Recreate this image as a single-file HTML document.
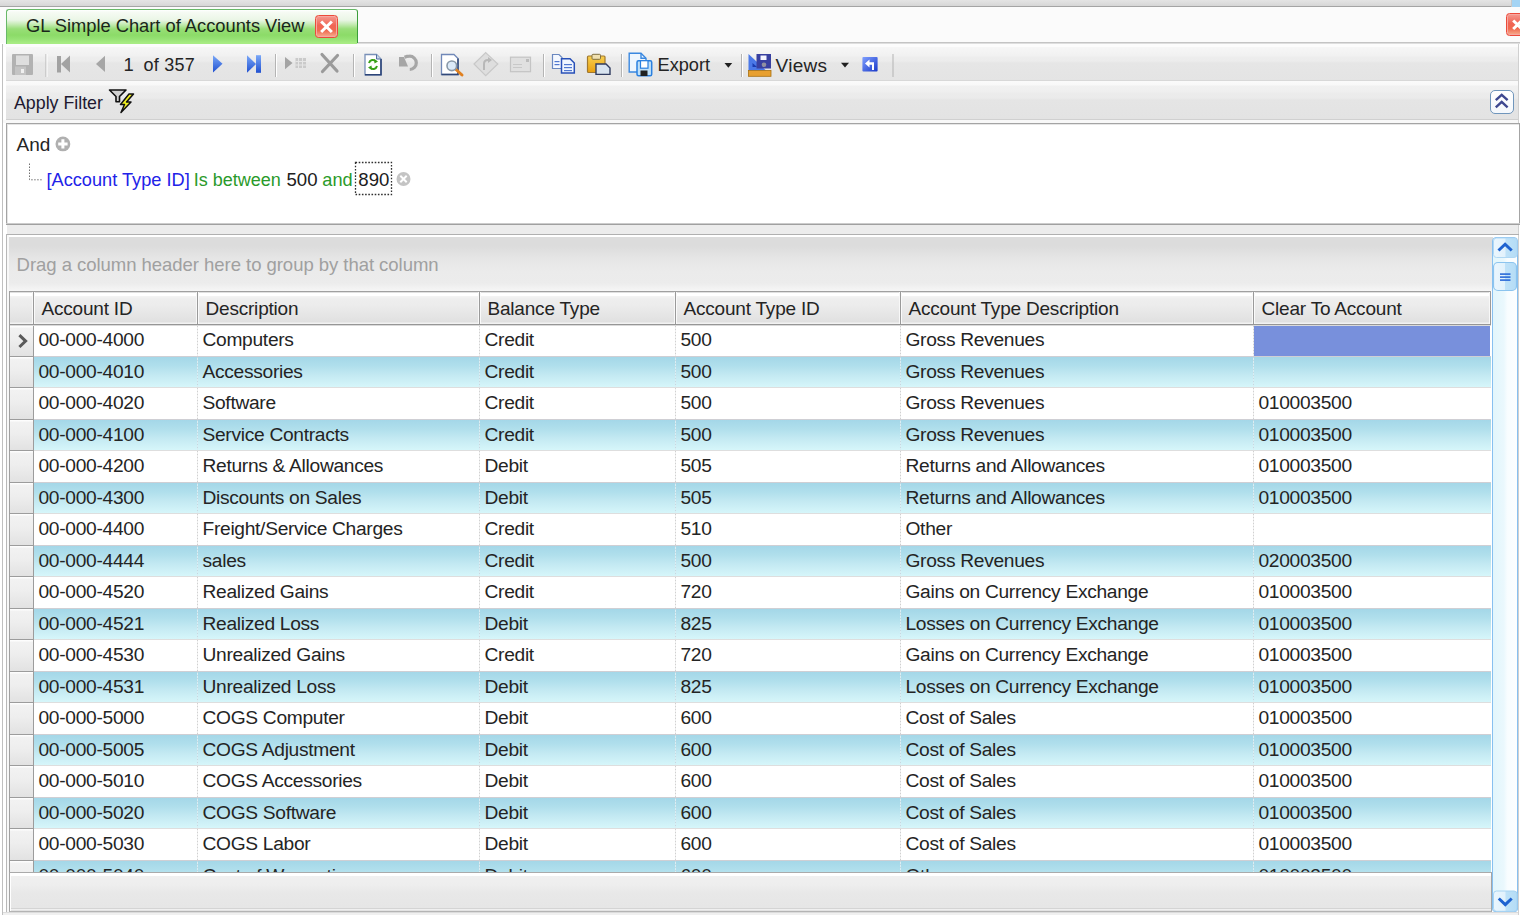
<!DOCTYPE html>
<html><head><meta charset="utf-8">
<style>
*{box-sizing:border-box;margin:0;padding:0}
html,body{width:1520px;height:915px;overflow:hidden;background:#fff;font-family:"Liberation Sans",sans-serif;color:#1a1a1a}
.a{position:absolute}
.t{position:absolute;white-space:nowrap;line-height:1;font-size:19px;color:#242424}
</style></head><body>
<!-- top strip -->
<div class="a" style="left:0;top:0;width:1511px;height:6px;background:linear-gradient(#e4e4e4,#d6d6d6)"></div>
<div class="a" style="left:0;top:6px;width:1511px;height:1px;background:#a4a4a4"></div>
<div class="a" style="left:1511px;top:0;width:1px;height:7px;background:#c8c8c8"></div>
<div class="a" style="left:1512px;top:0;width:8px;height:7px;background:#a4d4f4"></div>
<!-- tab strip bg -->
<div class="a" style="left:0;top:7px;width:1520px;height:36px;background:#fbfbfb"></div>
<div class="a" style="left:357px;top:42px;width:1163px;height:1px;background:#c4c4c4"></div>
<!-- tab -->
<div class="a" style="left:6px;top:9px;width:352px;height:35px;border:1px solid #68b868;border-left-width:1.5px;border-right:1px solid #3a9e3a;border-bottom:none;border-radius:3px 3px 0 0;background:linear-gradient(#ffffff 0px,#f6fbf4 2px,#eaf6e6 10px,#c8ecb8 14px,#98de78 19px,#8cdb68 25px,#96e274 29px,#a8ec84 33px)"></div>
<div class="t" id="tabt" style="left:26px;top:17px;font-size:18.3px;color:#1a261a">GL Simple Chart of Accounts View</div>
<!-- tab close -->
<div class="a" style="left:315px;top:15px;width:23px;height:22.5px;border-radius:3.5px;border:1px solid #ec4a3a;box-shadow:inset 0 0 0 1px #f6a8a0;background:linear-gradient(#f59a90,#f06454 45%,#f06a50 70%,#f6b090)"></div>
<svg class="a" style="left:315px;top:15px" width="23" height="23"><path d="M7.2 7.5 L15.8 16 M15.8 7.5 L7.2 16" stroke="#fff" stroke-width="3" stroke-linecap="square"/></svg>
<!-- right close -->
<div class="a" style="left:1506px;top:13px;width:23px;height:23px;border-radius:3.5px;border:1px solid #ec4a3a;box-shadow:inset 0 0 0 1px #f6a8a0;background:linear-gradient(#f59a90,#f06454 45%,#f06a50 70%,#f6b090)"></div>
<svg class="a" style="left:1506px;top:13px" width="14" height="23"><path d="M7.2 7.5 L15.8 16 M15.8 7.5 L7.2 16" stroke="#fff" stroke-width="3"/></svg>

<!-- panel borders -->
<div class="a" style="left:2px;top:44px;width:1px;height:871px;background:#c0c0c0"></div>
<div class="a" style="left:1518px;top:43px;width:1px;height:872px;background:#d0d0d0"></div>

<!-- toolbar -->
<div class="a" style="left:3px;top:44px;width:1515px;height:3px;background:#fcfcfc"></div>
<div class="a" style="left:357px;top:43px;width:1163px;height:1px;background:#dedede"></div>
<div class="a" style="left:6px;top:47px;width:1512px;height:34px;background:linear-gradient(#f6f6f6 0,#f1f1f1 9px,#ededed 10px,#ececec 14px,#e6e6e6 16px,#e4e4e4 33px,#d8d8d8 33px)"></div>
<!-- apply filter bar -->
<div class="a" style="left:6px;top:81px;width:1512px;height:38px;background:linear-gradient(#fafafa 0,#f8f8f8 4px,#f1f1f1 5px,#efefef 11px,#ececec 12px,#ebebeb 17px,#e5e5e5 19px,#e3e3e3 38px)"></div>
<div class="a" style="left:6px;top:119px;width:1512px;height:1px;background:#d0d0d0"></div>
<div class="a" style="left:3px;top:120px;width:1515px;height:3px;background:#f8f8f8"></div>
<div class="t" style="left:14px;top:95px;font-size:17.8px;color:#201830">Apply Filter</div>

<!--toolbar-->
<svg class="a" style="left:0;top:0" width="900" height="125" viewBox="0 0 900 125">
<defs>
<linearGradient id="gblue" x1="0" y1="0" x2="0" y2="1"><stop offset="0" stop-color="#7aa8f8"/><stop offset="1" stop-color="#2050d0"/></linearGradient>
<linearGradient id="gblue2" x1="0" y1="0" x2="1" y2="1"><stop offset="0" stop-color="#80a0ff"/><stop offset="1" stop-color="#1838c8"/></linearGradient>
<linearGradient id="gyel" x1="0" y1="0" x2="0" y2="1"><stop offset="0" stop-color="#f8d050"/><stop offset="1" stop-color="#e8a010"/></linearGradient>
</defs>
<!-- separators -->
<g fill="#b4b4b4">
<rect x="45.5" y="54" width="1" height="23"/><rect x="275" y="54" width="1" height="23"/><rect x="353" y="54" width="1" height="23"/>
<rect x="431" y="54" width="1" height="23"/><rect x="543" y="54" width="1" height="23"/><rect x="621" y="54" width="1" height="23"/>
<rect x="741" y="54" width="1" height="23"/><rect x="892.5" y="54" width="1" height="23"/>
</g>
<g fill="#ffffff">
<rect x="46.5" y="54" width="1" height="23"/><rect x="276" y="54" width="1" height="23"/><rect x="354" y="54" width="1" height="23"/>
<rect x="432" y="54" width="1" height="23"/><rect x="544" y="54" width="1" height="23"/><rect x="622" y="54" width="1" height="23"/>
<rect x="742" y="54" width="1" height="23"/>
</g>
<!-- save floppy -->
<rect x="12" y="54" width="21" height="21" rx="1" fill="#b2b2b2"/>
<rect x="16" y="55.5" width="13" height="9.5" fill="#dedede"/>
<rect x="15" y="66.5" width="11" height="8.5" fill="#c4c4c4"/>
<rect x="21" y="69" width="3" height="4" fill="#f0f0f0"/>
<!-- first -->
<g fill="#a2a2a2"><rect x="57" y="56" width="4" height="16.5"/><path d="M61 64 L70 55.5 L70 72.5 Z"/></g>
<!-- prev -->
<path d="M96 64 L105 55.8 L105 72 Z" fill="#a6a6a6"/>
<!-- next -->
<path d="M213 55.2 L222.5 63.8 L213 72.4 Z" fill="url(#gblue)"/>
<!-- last -->
<path d="M247 55.2 L256 64 L247 72.8 Z" fill="url(#gblue)"/><rect x="256" y="55.2" width="5" height="17.6" fill="url(#gblue)"/>
<!-- append -->
<path d="M285 57 L292.5 63 L285 69.2 Z" fill="#a4a4a4"/>
<g fill="#cacaca"><rect x="295.5" y="58" width="10.5" height="10"/></g>
<g fill="#e6e6e6"><rect x="298" y="58" width="1" height="10"/><rect x="302" y="58" width="1" height="10"/><rect x="295.5" y="61" width="10.5" height="1"/><rect x="295.5" y="64.5" width="10.5" height="1"/></g>
<!-- delete X -->
<path d="M322 54.5 L337 71 M337.5 55.5 L322.5 71.5" stroke="#9a9a9a" stroke-width="3.2" stroke-linecap="round"/>
<!-- refresh doc -->
<path d="M365 54.5 L376.5 54.5 L381 59 L381 74.8 L365 74.8 Z" fill="#fff" stroke="#7890b8" stroke-width="1.3"/>
<path d="M381 59 L381 74.8 L365 74.8" fill="none" stroke="#2c4478" stroke-width="1.6"/>
<path d="M376.5 54.5 L376.5 59 L381 59" fill="#c8d4e8" stroke="#5070a0" stroke-width="1"/>
<path d="M369 63 A4 4 0 0 1 376 61.5" fill="none" stroke="#38a018" stroke-width="2"/>
<path d="M377 66 A4 4 0 0 1 370 67.5" fill="none" stroke="#38a018" stroke-width="2"/>
<path d="M374 59 L378 61.5 L374.5 63.5 Z M372 70 L368 67.5 L371.5 65.5 Z" fill="#38a018"/>
<!-- undo -->
<path d="M404.5 57.2 Q407 56.2 409.5 56.2 A6 6 0 0 1 409.8 69.5" fill="none" stroke="#a6a6a6" stroke-width="3.2"/>
<path d="M399 57 L404 57 L408 66.5 L399 66.5 Z" fill="#a6a6a6"/>
<!-- print preview -->
<path d="M441.5 54.5 L454 54.5 L458 58.5 L458 74.5 L441.5 74.5 Z" fill="#fff" stroke="#7088b8" stroke-width="1.3"/>
<path d="M458 58.5 L458 74.5 L441.5 74.5" fill="none" stroke="#304878" stroke-width="1.5"/>
<path d="M456 69.5 L462 75" stroke="#e08020" stroke-width="3" stroke-linecap="round"/>
<circle cx="451.8" cy="65.8" r="4.8" fill="#dceaf8" stroke="#8898a8" stroke-width="1.6"/>
<!-- diamond disabled -->
<path d="M485.7 52.6 L497.8 64 L485.7 75.6 L474 64 Z" fill="#dedede" stroke="#c8c8c8" stroke-width="1.2"/>
<path d="M484 70 L484 64 Q484 60 488 60 L489 60" fill="none" stroke="#b8b8b8" stroke-width="2"/>
<path d="M488 57 L492 60 L488 63 Z" fill="#b8b8b8"/>
<!-- envelope disabled -->
<rect x="510.5" y="57.2" width="20" height="14.5" fill="#e0e0e0" stroke="#c4c4c4" stroke-width="1.2"/>
<rect x="526" y="59" width="3" height="3" fill="#bcbcbc"/>
<rect x="513" y="64" width="9" height="1" fill="#c8c8c8"/><rect x="513" y="67" width="9" height="1" fill="#c8c8c8"/>
<!-- copy -->
<path d="M552.5 54.5 L559 54.5 L562 57.5 L562 68.5 L552.5 68.5 Z" fill="#f4f8ff" stroke="#6a88c0" stroke-width="1.2"/>
<path d="M561.5 58.8 L570 58.8 L574.3 63 L574.3 73 L561.5 73 Z" fill="#f0f6ff" stroke="#2850b8" stroke-width="1.5"/>
<g fill="#5078d0"><rect x="564" y="64" width="8" height="1.2"/><rect x="564" y="67" width="8" height="1.2"/><rect x="564" y="70" width="8" height="1.2"/><rect x="554.5" y="61" width="5" height="1.2"/><rect x="554.5" y="64" width="5" height="1.2"/></g>
<!-- paste -->
<rect x="587.5" y="56" width="17.5" height="16.5" rx="1" fill="url(#gyel)" stroke="#a07830" stroke-width="1.2"/>
<rect x="592" y="54.3" width="8.5" height="5" rx="1" fill="#f0e0b0" stroke="#807040" stroke-width="1"/>
<path d="M596 64 L606 64 L610 68 L610 74.4 L596 74.4 Z" fill="#d8e4f0" stroke="#303c60" stroke-width="1.4"/>
<!-- export -->
<path d="M629.2 53.2 L641 53.2 L646 58.2 L646 72 L629.2 72 Z" fill="#eef6fe" stroke="#3a88e0" stroke-width="1.4"/>
<path d="M641 53.2 L641 58.2 L646 58.2" fill="none" stroke="#3a88e0" stroke-width="1.4"/>
<rect x="637" y="60.7" width="14.7" height="15" rx="1.5" fill="#bfe0f8" stroke="#2a80e0" stroke-width="1.5"/>
<rect x="640.5" y="60.7" width="7.5" height="7.5" fill="#fff" stroke="#2a80e0" stroke-width="1.2"/>
<rect x="640.5" y="70.5" width="7" height="5.5" fill="#202020"/>
<!-- export dropdown -->
<path d="M724.5 63 L732.2 63 L728.35 67.8 Z" fill="#202020"/>
<!-- views icon -->
<path d="M748.5 54 L748.5 70.5 L766 70.5 Z" fill="#4a78e8"/>
<path d="M752.5 63 L752.5 67 L757 67 Z" fill="#1a3cb0"/>
<rect x="756.5" y="54" width="14.5" height="14.5" fill="#3840a0"/>
<rect x="760.5" y="55.5" width="6" height="4.5" fill="#f4f4ff"/>
<circle cx="764" cy="64.8" r="2.3" fill="#9090a0"/>
<rect x="748.5" y="70.5" width="22.5" height="5.8" fill="#e8a030" stroke="#a87010" stroke-width="0.8"/>
<!-- views dropdown -->
<path d="M841 62.7 L849 62.7 L845 67.5 Z" fill="#202020"/>
<!-- blue icon -->
<rect x="862.4" y="57" width="15.2" height="14.6" rx="1" fill="url(#gblue2)"/>
<path d="M865 63.5 L869.5 59.5 L869.5 62.2 L874 62.2 L874 70 L872 70 L872 64.8 L869.5 64.8 L869.5 67.5 Z" fill="#fff"/>
<!-- apply filter icon -->
<path d="M109.5 90 L126 90 L119.5 96.5 L119.5 101.8 L116 101.8 L116 96.5 Z" fill="#d0d0d0" stroke="#101010" stroke-width="1.6" stroke-linejoin="round"/>
<path d="M129 94 L133.5 94 L126.5 102 L131 102 L121 112.5 L124.5 104.5 L120.5 104.5 Z" fill="#f0f020" stroke="#101010" stroke-width="1.5" stroke-linejoin="round"/>
</svg>
<div class="t" style="left:123.5px;top:56px;font-size:18.4px">1</div>
<div class="t" style="left:143.5px;top:56px;font-size:18px;letter-spacing:0.25px">of 357</div>
<div class="t" style="left:657.5px;top:56px;font-size:18.2px">Export</div>
<div class="t" style="left:775.5px;top:55.5px;font-size:19px;letter-spacing:0.3px">Views</div>
<!--/toolbar-->

<!-- filter box -->
<div class="a" style="left:6px;top:123px;width:1514px;height:102px;border:1px solid #a4a4a4;border-bottom-color:#a0a0a0;box-shadow:inset 1px 1px 0 #e6e6e6;background:#fff"></div>
<div class="a" style="left:6px;top:223px;width:1514px;height:1px;background:#cccccc"></div>
<div class="t" style="left:16.5px;top:134.8px;font-size:19px">And</div>
<svg class="a" style="left:0;top:120px" width="420" height="80" viewBox="0 120 420 80">
<circle cx="62.9" cy="143.9" r="7.4" fill="#b0b0b0"/>
<path d="M62.9 139.2 V148.6 M58.2 143.9 H67.6" stroke="#fff" stroke-width="3"/>
<circle cx="403.5" cy="179" r="7" fill="#c4c4c4"/>
<path d="M400.3 175.8 L406.7 182.2 M406.7 175.8 L400.3 182.2" stroke="#fff" stroke-width="2"/>
<path d="M29.5 163.5 V179.8 H42" fill="none" stroke="#707070" stroke-width="1" stroke-dasharray="1.5 1.5"/>
<rect x="355.5" y="162.5" width="36" height="32" fill="none" stroke="#303030" stroke-width="1.3" stroke-dasharray="1.6 1.6"/>
</svg>
<div class="t" style="left:46.5px;top:170.5px;font-size:18.2px;color:#2222e8">[Account Type ID]</div>
<div class="t" style="left:193.8px;top:170.5px;font-size:18px;color:#2a9a2a">Is between</div>
<div class="t" style="left:286.5px;top:170.5px;font-size:18.6px;color:#202020">500</div>
<div class="t" style="left:322.3px;top:170.5px;font-size:18.2px;color:#2a9a2a">and</div>
<div class="t" style="left:358.3px;top:170.5px;font-size:18.6px;color:#202020">890</div>

<!-- gap and grid container -->
<div class="a" style="left:7px;top:225px;width:1511px;height:9px;background:#ececec"></div>
<div class="a" style="left:6px;top:234px;width:1513px;height:1px;background:#b0b0b0"></div>
<div class="a" style="left:6px;top:234px;width:1px;height:680px;background:#b8b8b8"></div>
<!-- group panel -->
<div class="a" style="left:7px;top:235px;width:2px;height:677px;background:#f8f8f8"></div>
<div class="a" style="left:9px;top:235px;width:1484px;height:56px;background:linear-gradient(#fff 0px,#fff 2px,#dcdcdc 2px,#dcdcdc 11px,#e6e6e6 24px,#ebebeb 36px,#ececec 48px,#f6f6f6 56px)"></div>
<div class="t" style="left:16.6px;top:256px;color:#a0a0a0;font-size:18.55px;letter-spacing:-0.05px">Drag a column header here to group by that column</div>

<div id="grid"><div class="a" style="left:9px;top:291px;width:1483px;height:581px;overflow:hidden">
<div class="a" style="left:0px;top:0px;width:1482px;height:33px;background:linear-gradient(#a0a0a0 0,#a0a0a0 1px,#e0e0e0 1px,#e0e0e0 2px,#fff 2px,#fff 5px,#f4f4f4 5px,#eeeeee 8px,#ececec 14px,#e4e4e4 26px,#e0e0e0 31px,#f2f2f2 32px)"></div>
<div class="a" style="left:0px;top:33px;width:1482px;height:1px;background:#969696"></div>
<div class="a" style="left:0px;top:34px;width:1482px;height:1px;background:#dadada"></div>
<div class="a" style="left:0px;top:0px;width:1px;height:581px;background:#a0a0a0"></div>
<div class="a" style="left:23px;top:1px;width:1px;height:32px;background:#f8f8f8"></div>
<div class="a" style="left:24px;top:1px;width:1px;height:32px;background:#9a9a9a"></div>
<div class="a" style="left:25px;top:1px;width:1px;height:32px;background:#fafafa"></div>
<div class="a" style="left:187px;top:1px;width:1px;height:32px;background:#f8f8f8"></div>
<div class="a" style="left:188px;top:1px;width:1px;height:32px;background:#9a9a9a"></div>
<div class="a" style="left:189px;top:1px;width:1px;height:32px;background:#fafafa"></div>
<div class="a" style="left:469px;top:1px;width:1px;height:32px;background:#f8f8f8"></div>
<div class="a" style="left:470px;top:1px;width:1px;height:32px;background:#9a9a9a"></div>
<div class="a" style="left:471px;top:1px;width:1px;height:32px;background:#fafafa"></div>
<div class="a" style="left:665px;top:1px;width:1px;height:32px;background:#f8f8f8"></div>
<div class="a" style="left:666px;top:1px;width:1px;height:32px;background:#9a9a9a"></div>
<div class="a" style="left:667px;top:1px;width:1px;height:32px;background:#fafafa"></div>
<div class="a" style="left:890px;top:1px;width:1px;height:32px;background:#f8f8f8"></div>
<div class="a" style="left:891px;top:1px;width:1px;height:32px;background:#9a9a9a"></div>
<div class="a" style="left:892px;top:1px;width:1px;height:32px;background:#fafafa"></div>
<div class="a" style="left:1243px;top:1px;width:1px;height:32px;background:#f8f8f8"></div>
<div class="a" style="left:1244px;top:1px;width:1px;height:32px;background:#9a9a9a"></div>
<div class="a" style="left:1245px;top:1px;width:1px;height:32px;background:#fafafa"></div>
<div class="a" style="left:1480px;top:1px;width:1px;height:32px;background:#f8f8f8"></div>
<div class="a" style="left:1481px;top:1px;width:1px;height:32px;background:#9a9a9a"></div>
<div class="a" style="left:1482px;top:1px;width:1px;height:32px;background:#fafafa"></div>
<div class="a" style="left:0px;top:1px;width:1px;height:32px;background:#a0a0a0"></div>
<div class="t" style="left:32.50px;top:7.60px;font-size:19px;letter-spacing:-0.2px">Account ID</div>
<div class="t" style="left:196.50px;top:7.60px;font-size:19px;letter-spacing:-0.2px">Description</div>
<div class="t" style="left:478.50px;top:7.60px;font-size:19px;letter-spacing:-0.2px">Balance Type</div>
<div class="t" style="left:674.50px;top:7.60px;font-size:19px;letter-spacing:-0.2px">Account Type ID</div>
<div class="t" style="left:899.50px;top:7.60px;font-size:19px;letter-spacing:-0.2px">Account Type Description</div>
<div class="t" style="left:1252.50px;top:7.60px;font-size:19px;letter-spacing:-0.2px">Clear To Account</div>
<div class="a" style="left:25px;top:35px;width:1457px;height:30px;background:#fff"></div>
<div class="a" style="left:1px;top:35px;width:23px;height:30px;background:linear-gradient(#fdfdfd 0,#fdfdfd 1px,#f2f2f2 2px,#eeeeee 45%,#e2e2e2)"></div>
<div class="a" style="left:0px;top:65px;width:25px;height:1px;background:#9c9c9c"></div>
<div class="a" style="left:24px;top:35px;width:1px;height:31px;background:#9c9c9c"></div>
<div class="a" style="left:25px;top:65px;width:1457px;height:1px;background:#cfcfd4"></div>
<div class="a" style="left:188px;top:35px;width:1px;height:30px;background:repeating-linear-gradient(#d0d0d0 0,#d0d0d0 1px,#eeeeee 1px,#eeeeee 3px)"></div>
<div class="a" style="left:470px;top:35px;width:1px;height:30px;background:repeating-linear-gradient(#d0d0d0 0,#d0d0d0 1px,#eeeeee 1px,#eeeeee 3px)"></div>
<div class="a" style="left:666px;top:35px;width:1px;height:30px;background:repeating-linear-gradient(#d0d0d0 0,#d0d0d0 1px,#eeeeee 1px,#eeeeee 3px)"></div>
<div class="a" style="left:891px;top:35px;width:1px;height:30px;background:repeating-linear-gradient(#d0d0d0 0,#d0d0d0 1px,#eeeeee 1px,#eeeeee 3px)"></div>
<div class="a" style="left:1244px;top:35px;width:1px;height:30px;background:repeating-linear-gradient(#d0d0d0 0,#d0d0d0 1px,#eeeeee 1px,#eeeeee 3px)"></div>
<div class="a" style="left:1245px;top:35px;width:236px;height:30px;background:#7890dc"></div>
<div class="t" style="left:29.50px;top:39.10px;font-size:19.2px;letter-spacing:-0.3px">00-000-4000</div>
<div class="t" style="left:193.50px;top:39.10px;font-size:19.2px;letter-spacing:-0.3px">Computers</div>
<div class="t" style="left:475.50px;top:39.10px;font-size:19.2px;letter-spacing:-0.3px">Credit</div>
<div class="t" style="left:671.50px;top:39.10px;font-size:19.2px;letter-spacing:-0.3px">500</div>
<div class="t" style="left:896.50px;top:39.10px;font-size:19.2px;letter-spacing:-0.3px">Gross Revenues</div>
<div class="a" style="left:25px;top:66px;width:1457px;height:30px;background:linear-gradient(#a4d7e8,#b0dfec 30%,#c3e9f2 60%,#d6f6fa)"></div>
<div class="a" style="left:1px;top:66px;width:23px;height:30px;background:linear-gradient(#fdfdfd 0,#fdfdfd 1px,#f2f2f2 2px,#eeeeee 45%,#e2e2e2)"></div>
<div class="a" style="left:0px;top:96px;width:25px;height:1px;background:#9c9c9c"></div>
<div class="a" style="left:24px;top:66px;width:1px;height:31px;background:#9c9c9c"></div>
<div class="a" style="left:25px;top:96px;width:1457px;height:1px;background:#dedede"></div>
<div class="a" style="left:188px;top:66px;width:1px;height:30px;background:repeating-linear-gradient(#c6d8e0 0,#c6d8e0 1px,#d8eef4 1px,#d8eef4 3px)"></div>
<div class="a" style="left:470px;top:66px;width:1px;height:30px;background:repeating-linear-gradient(#c6d8e0 0,#c6d8e0 1px,#d8eef4 1px,#d8eef4 3px)"></div>
<div class="a" style="left:666px;top:66px;width:1px;height:30px;background:repeating-linear-gradient(#c6d8e0 0,#c6d8e0 1px,#d8eef4 1px,#d8eef4 3px)"></div>
<div class="a" style="left:891px;top:66px;width:1px;height:30px;background:repeating-linear-gradient(#c6d8e0 0,#c6d8e0 1px,#d8eef4 1px,#d8eef4 3px)"></div>
<div class="a" style="left:1244px;top:66px;width:1px;height:30px;background:repeating-linear-gradient(#c6d8e0 0,#c6d8e0 1px,#d8eef4 1px,#d8eef4 3px)"></div>
<div class="t" style="left:29.50px;top:71.10px;font-size:19.2px;letter-spacing:-0.3px">00-000-4010</div>
<div class="t" style="left:193.50px;top:71.10px;font-size:19.2px;letter-spacing:-0.3px">Accessories</div>
<div class="t" style="left:475.50px;top:71.10px;font-size:19.2px;letter-spacing:-0.3px">Credit</div>
<div class="t" style="left:671.50px;top:71.10px;font-size:19.2px;letter-spacing:-0.3px">500</div>
<div class="t" style="left:896.50px;top:71.10px;font-size:19.2px;letter-spacing:-0.3px">Gross Revenues</div>
<div class="a" style="left:25px;top:97px;width:1457px;height:31px;background:#fff"></div>
<div class="a" style="left:1px;top:97px;width:23px;height:31px;background:linear-gradient(#fdfdfd 0,#fdfdfd 1px,#f2f2f2 2px,#eeeeee 45%,#e2e2e2)"></div>
<div class="a" style="left:0px;top:128px;width:25px;height:1px;background:#9c9c9c"></div>
<div class="a" style="left:24px;top:97px;width:1px;height:32px;background:#9c9c9c"></div>
<div class="a" style="left:25px;top:128px;width:1457px;height:1px;background:#cfcfd4"></div>
<div class="a" style="left:188px;top:97px;width:1px;height:31px;background:repeating-linear-gradient(#d0d0d0 0,#d0d0d0 1px,#eeeeee 1px,#eeeeee 3px)"></div>
<div class="a" style="left:470px;top:97px;width:1px;height:31px;background:repeating-linear-gradient(#d0d0d0 0,#d0d0d0 1px,#eeeeee 1px,#eeeeee 3px)"></div>
<div class="a" style="left:666px;top:97px;width:1px;height:31px;background:repeating-linear-gradient(#d0d0d0 0,#d0d0d0 1px,#eeeeee 1px,#eeeeee 3px)"></div>
<div class="a" style="left:891px;top:97px;width:1px;height:31px;background:repeating-linear-gradient(#d0d0d0 0,#d0d0d0 1px,#eeeeee 1px,#eeeeee 3px)"></div>
<div class="a" style="left:1244px;top:97px;width:1px;height:31px;background:repeating-linear-gradient(#d0d0d0 0,#d0d0d0 1px,#eeeeee 1px,#eeeeee 3px)"></div>
<div class="t" style="left:29.50px;top:102.10px;font-size:19.2px;letter-spacing:-0.3px">00-000-4020</div>
<div class="t" style="left:193.50px;top:102.10px;font-size:19.2px;letter-spacing:-0.3px">Software</div>
<div class="t" style="left:475.50px;top:102.10px;font-size:19.2px;letter-spacing:-0.3px">Credit</div>
<div class="t" style="left:671.50px;top:102.10px;font-size:19.2px;letter-spacing:-0.3px">500</div>
<div class="t" style="left:896.50px;top:102.10px;font-size:19.2px;letter-spacing:-0.3px">Gross Revenues</div>
<div class="t" style="left:1249.50px;top:102.10px;font-size:19.2px;letter-spacing:-0.3px">010003500</div>
<div class="a" style="left:25px;top:129px;width:1457px;height:30px;background:linear-gradient(#a4d7e8,#b0dfec 30%,#c3e9f2 60%,#d6f6fa)"></div>
<div class="a" style="left:1px;top:129px;width:23px;height:30px;background:linear-gradient(#fdfdfd 0,#fdfdfd 1px,#f2f2f2 2px,#eeeeee 45%,#e2e2e2)"></div>
<div class="a" style="left:0px;top:159px;width:25px;height:1px;background:#9c9c9c"></div>
<div class="a" style="left:24px;top:129px;width:1px;height:31px;background:#9c9c9c"></div>
<div class="a" style="left:25px;top:159px;width:1457px;height:1px;background:#dedede"></div>
<div class="a" style="left:188px;top:129px;width:1px;height:30px;background:repeating-linear-gradient(#c6d8e0 0,#c6d8e0 1px,#d8eef4 1px,#d8eef4 3px)"></div>
<div class="a" style="left:470px;top:129px;width:1px;height:30px;background:repeating-linear-gradient(#c6d8e0 0,#c6d8e0 1px,#d8eef4 1px,#d8eef4 3px)"></div>
<div class="a" style="left:666px;top:129px;width:1px;height:30px;background:repeating-linear-gradient(#c6d8e0 0,#c6d8e0 1px,#d8eef4 1px,#d8eef4 3px)"></div>
<div class="a" style="left:891px;top:129px;width:1px;height:30px;background:repeating-linear-gradient(#c6d8e0 0,#c6d8e0 1px,#d8eef4 1px,#d8eef4 3px)"></div>
<div class="a" style="left:1244px;top:129px;width:1px;height:30px;background:repeating-linear-gradient(#c6d8e0 0,#c6d8e0 1px,#d8eef4 1px,#d8eef4 3px)"></div>
<div class="t" style="left:29.50px;top:134.10px;font-size:19.2px;letter-spacing:-0.3px">00-000-4100</div>
<div class="t" style="left:193.50px;top:134.10px;font-size:19.2px;letter-spacing:-0.3px">Service Contracts</div>
<div class="t" style="left:475.50px;top:134.10px;font-size:19.2px;letter-spacing:-0.3px">Credit</div>
<div class="t" style="left:671.50px;top:134.10px;font-size:19.2px;letter-spacing:-0.3px">500</div>
<div class="t" style="left:896.50px;top:134.10px;font-size:19.2px;letter-spacing:-0.3px">Gross Revenues</div>
<div class="t" style="left:1249.50px;top:134.10px;font-size:19.2px;letter-spacing:-0.3px">010003500</div>
<div class="a" style="left:25px;top:160px;width:1457px;height:31px;background:#fff"></div>
<div class="a" style="left:1px;top:160px;width:23px;height:31px;background:linear-gradient(#fdfdfd 0,#fdfdfd 1px,#f2f2f2 2px,#eeeeee 45%,#e2e2e2)"></div>
<div class="a" style="left:0px;top:191px;width:25px;height:1px;background:#9c9c9c"></div>
<div class="a" style="left:24px;top:160px;width:1px;height:32px;background:#9c9c9c"></div>
<div class="a" style="left:25px;top:191px;width:1457px;height:1px;background:#cfcfd4"></div>
<div class="a" style="left:188px;top:160px;width:1px;height:31px;background:repeating-linear-gradient(#d0d0d0 0,#d0d0d0 1px,#eeeeee 1px,#eeeeee 3px)"></div>
<div class="a" style="left:470px;top:160px;width:1px;height:31px;background:repeating-linear-gradient(#d0d0d0 0,#d0d0d0 1px,#eeeeee 1px,#eeeeee 3px)"></div>
<div class="a" style="left:666px;top:160px;width:1px;height:31px;background:repeating-linear-gradient(#d0d0d0 0,#d0d0d0 1px,#eeeeee 1px,#eeeeee 3px)"></div>
<div class="a" style="left:891px;top:160px;width:1px;height:31px;background:repeating-linear-gradient(#d0d0d0 0,#d0d0d0 1px,#eeeeee 1px,#eeeeee 3px)"></div>
<div class="a" style="left:1244px;top:160px;width:1px;height:31px;background:repeating-linear-gradient(#d0d0d0 0,#d0d0d0 1px,#eeeeee 1px,#eeeeee 3px)"></div>
<div class="t" style="left:29.50px;top:165.10px;font-size:19.2px;letter-spacing:-0.3px">00-000-4200</div>
<div class="t" style="left:193.50px;top:165.10px;font-size:19.2px;letter-spacing:-0.3px">Returns &amp; Allowances</div>
<div class="t" style="left:475.50px;top:165.10px;font-size:19.2px;letter-spacing:-0.3px">Debit</div>
<div class="t" style="left:671.50px;top:165.10px;font-size:19.2px;letter-spacing:-0.3px">505</div>
<div class="t" style="left:896.50px;top:165.10px;font-size:19.2px;letter-spacing:-0.3px">Returns and Allowances</div>
<div class="t" style="left:1249.50px;top:165.10px;font-size:19.2px;letter-spacing:-0.3px">010003500</div>
<div class="a" style="left:25px;top:192px;width:1457px;height:30px;background:linear-gradient(#a4d7e8,#b0dfec 30%,#c3e9f2 60%,#d6f6fa)"></div>
<div class="a" style="left:1px;top:192px;width:23px;height:30px;background:linear-gradient(#fdfdfd 0,#fdfdfd 1px,#f2f2f2 2px,#eeeeee 45%,#e2e2e2)"></div>
<div class="a" style="left:0px;top:222px;width:25px;height:1px;background:#9c9c9c"></div>
<div class="a" style="left:24px;top:192px;width:1px;height:31px;background:#9c9c9c"></div>
<div class="a" style="left:25px;top:222px;width:1457px;height:1px;background:#dedede"></div>
<div class="a" style="left:188px;top:192px;width:1px;height:30px;background:repeating-linear-gradient(#c6d8e0 0,#c6d8e0 1px,#d8eef4 1px,#d8eef4 3px)"></div>
<div class="a" style="left:470px;top:192px;width:1px;height:30px;background:repeating-linear-gradient(#c6d8e0 0,#c6d8e0 1px,#d8eef4 1px,#d8eef4 3px)"></div>
<div class="a" style="left:666px;top:192px;width:1px;height:30px;background:repeating-linear-gradient(#c6d8e0 0,#c6d8e0 1px,#d8eef4 1px,#d8eef4 3px)"></div>
<div class="a" style="left:891px;top:192px;width:1px;height:30px;background:repeating-linear-gradient(#c6d8e0 0,#c6d8e0 1px,#d8eef4 1px,#d8eef4 3px)"></div>
<div class="a" style="left:1244px;top:192px;width:1px;height:30px;background:repeating-linear-gradient(#c6d8e0 0,#c6d8e0 1px,#d8eef4 1px,#d8eef4 3px)"></div>
<div class="t" style="left:29.50px;top:197.10px;font-size:19.2px;letter-spacing:-0.3px">00-000-4300</div>
<div class="t" style="left:193.50px;top:197.10px;font-size:19.2px;letter-spacing:-0.3px">Discounts on Sales</div>
<div class="t" style="left:475.50px;top:197.10px;font-size:19.2px;letter-spacing:-0.3px">Debit</div>
<div class="t" style="left:671.50px;top:197.10px;font-size:19.2px;letter-spacing:-0.3px">505</div>
<div class="t" style="left:896.50px;top:197.10px;font-size:19.2px;letter-spacing:-0.3px">Returns and Allowances</div>
<div class="t" style="left:1249.50px;top:197.10px;font-size:19.2px;letter-spacing:-0.3px">010003500</div>
<div class="a" style="left:25px;top:223px;width:1457px;height:31px;background:#fff"></div>
<div class="a" style="left:1px;top:223px;width:23px;height:31px;background:linear-gradient(#fdfdfd 0,#fdfdfd 1px,#f2f2f2 2px,#eeeeee 45%,#e2e2e2)"></div>
<div class="a" style="left:0px;top:254px;width:25px;height:1px;background:#9c9c9c"></div>
<div class="a" style="left:24px;top:223px;width:1px;height:32px;background:#9c9c9c"></div>
<div class="a" style="left:25px;top:254px;width:1457px;height:1px;background:#cfcfd4"></div>
<div class="a" style="left:188px;top:223px;width:1px;height:31px;background:repeating-linear-gradient(#d0d0d0 0,#d0d0d0 1px,#eeeeee 1px,#eeeeee 3px)"></div>
<div class="a" style="left:470px;top:223px;width:1px;height:31px;background:repeating-linear-gradient(#d0d0d0 0,#d0d0d0 1px,#eeeeee 1px,#eeeeee 3px)"></div>
<div class="a" style="left:666px;top:223px;width:1px;height:31px;background:repeating-linear-gradient(#d0d0d0 0,#d0d0d0 1px,#eeeeee 1px,#eeeeee 3px)"></div>
<div class="a" style="left:891px;top:223px;width:1px;height:31px;background:repeating-linear-gradient(#d0d0d0 0,#d0d0d0 1px,#eeeeee 1px,#eeeeee 3px)"></div>
<div class="a" style="left:1244px;top:223px;width:1px;height:31px;background:repeating-linear-gradient(#d0d0d0 0,#d0d0d0 1px,#eeeeee 1px,#eeeeee 3px)"></div>
<div class="t" style="left:29.50px;top:228.10px;font-size:19.2px;letter-spacing:-0.3px">00-000-4400</div>
<div class="t" style="left:193.50px;top:228.10px;font-size:19.2px;letter-spacing:-0.3px">Freight/Service Charges</div>
<div class="t" style="left:475.50px;top:228.10px;font-size:19.2px;letter-spacing:-0.3px">Credit</div>
<div class="t" style="left:671.50px;top:228.10px;font-size:19.2px;letter-spacing:-0.3px">510</div>
<div class="t" style="left:896.50px;top:228.10px;font-size:19.2px;letter-spacing:-0.3px">Other</div>
<div class="a" style="left:25px;top:255px;width:1457px;height:30px;background:linear-gradient(#a4d7e8,#b0dfec 30%,#c3e9f2 60%,#d6f6fa)"></div>
<div class="a" style="left:1px;top:255px;width:23px;height:30px;background:linear-gradient(#fdfdfd 0,#fdfdfd 1px,#f2f2f2 2px,#eeeeee 45%,#e2e2e2)"></div>
<div class="a" style="left:0px;top:285px;width:25px;height:1px;background:#9c9c9c"></div>
<div class="a" style="left:24px;top:255px;width:1px;height:31px;background:#9c9c9c"></div>
<div class="a" style="left:25px;top:285px;width:1457px;height:1px;background:#dedede"></div>
<div class="a" style="left:188px;top:255px;width:1px;height:30px;background:repeating-linear-gradient(#c6d8e0 0,#c6d8e0 1px,#d8eef4 1px,#d8eef4 3px)"></div>
<div class="a" style="left:470px;top:255px;width:1px;height:30px;background:repeating-linear-gradient(#c6d8e0 0,#c6d8e0 1px,#d8eef4 1px,#d8eef4 3px)"></div>
<div class="a" style="left:666px;top:255px;width:1px;height:30px;background:repeating-linear-gradient(#c6d8e0 0,#c6d8e0 1px,#d8eef4 1px,#d8eef4 3px)"></div>
<div class="a" style="left:891px;top:255px;width:1px;height:30px;background:repeating-linear-gradient(#c6d8e0 0,#c6d8e0 1px,#d8eef4 1px,#d8eef4 3px)"></div>
<div class="a" style="left:1244px;top:255px;width:1px;height:30px;background:repeating-linear-gradient(#c6d8e0 0,#c6d8e0 1px,#d8eef4 1px,#d8eef4 3px)"></div>
<div class="t" style="left:29.50px;top:260.10px;font-size:19.2px;letter-spacing:-0.3px">00-000-4444</div>
<div class="t" style="left:193.50px;top:260.10px;font-size:19.2px;letter-spacing:-0.3px">sales</div>
<div class="t" style="left:475.50px;top:260.10px;font-size:19.2px;letter-spacing:-0.3px">Credit</div>
<div class="t" style="left:671.50px;top:260.10px;font-size:19.2px;letter-spacing:-0.3px">500</div>
<div class="t" style="left:896.50px;top:260.10px;font-size:19.2px;letter-spacing:-0.3px">Gross Revenues</div>
<div class="t" style="left:1249.50px;top:260.10px;font-size:19.2px;letter-spacing:-0.3px">020003500</div>
<div class="a" style="left:25px;top:286px;width:1457px;height:31px;background:#fff"></div>
<div class="a" style="left:1px;top:286px;width:23px;height:31px;background:linear-gradient(#fdfdfd 0,#fdfdfd 1px,#f2f2f2 2px,#eeeeee 45%,#e2e2e2)"></div>
<div class="a" style="left:0px;top:317px;width:25px;height:1px;background:#9c9c9c"></div>
<div class="a" style="left:24px;top:286px;width:1px;height:32px;background:#9c9c9c"></div>
<div class="a" style="left:25px;top:317px;width:1457px;height:1px;background:#cfcfd4"></div>
<div class="a" style="left:188px;top:286px;width:1px;height:31px;background:repeating-linear-gradient(#d0d0d0 0,#d0d0d0 1px,#eeeeee 1px,#eeeeee 3px)"></div>
<div class="a" style="left:470px;top:286px;width:1px;height:31px;background:repeating-linear-gradient(#d0d0d0 0,#d0d0d0 1px,#eeeeee 1px,#eeeeee 3px)"></div>
<div class="a" style="left:666px;top:286px;width:1px;height:31px;background:repeating-linear-gradient(#d0d0d0 0,#d0d0d0 1px,#eeeeee 1px,#eeeeee 3px)"></div>
<div class="a" style="left:891px;top:286px;width:1px;height:31px;background:repeating-linear-gradient(#d0d0d0 0,#d0d0d0 1px,#eeeeee 1px,#eeeeee 3px)"></div>
<div class="a" style="left:1244px;top:286px;width:1px;height:31px;background:repeating-linear-gradient(#d0d0d0 0,#d0d0d0 1px,#eeeeee 1px,#eeeeee 3px)"></div>
<div class="t" style="left:29.50px;top:291.10px;font-size:19.2px;letter-spacing:-0.3px">00-000-4520</div>
<div class="t" style="left:193.50px;top:291.10px;font-size:19.2px;letter-spacing:-0.3px">Realized Gains</div>
<div class="t" style="left:475.50px;top:291.10px;font-size:19.2px;letter-spacing:-0.3px">Credit</div>
<div class="t" style="left:671.50px;top:291.10px;font-size:19.2px;letter-spacing:-0.3px">720</div>
<div class="t" style="left:896.50px;top:291.10px;font-size:19.2px;letter-spacing:-0.3px">Gains on Currency Exchange</div>
<div class="t" style="left:1249.50px;top:291.10px;font-size:19.2px;letter-spacing:-0.3px">010003500</div>
<div class="a" style="left:25px;top:318px;width:1457px;height:30px;background:linear-gradient(#a4d7e8,#b0dfec 30%,#c3e9f2 60%,#d6f6fa)"></div>
<div class="a" style="left:1px;top:318px;width:23px;height:30px;background:linear-gradient(#fdfdfd 0,#fdfdfd 1px,#f2f2f2 2px,#eeeeee 45%,#e2e2e2)"></div>
<div class="a" style="left:0px;top:348px;width:25px;height:1px;background:#9c9c9c"></div>
<div class="a" style="left:24px;top:318px;width:1px;height:31px;background:#9c9c9c"></div>
<div class="a" style="left:25px;top:348px;width:1457px;height:1px;background:#dedede"></div>
<div class="a" style="left:188px;top:318px;width:1px;height:30px;background:repeating-linear-gradient(#c6d8e0 0,#c6d8e0 1px,#d8eef4 1px,#d8eef4 3px)"></div>
<div class="a" style="left:470px;top:318px;width:1px;height:30px;background:repeating-linear-gradient(#c6d8e0 0,#c6d8e0 1px,#d8eef4 1px,#d8eef4 3px)"></div>
<div class="a" style="left:666px;top:318px;width:1px;height:30px;background:repeating-linear-gradient(#c6d8e0 0,#c6d8e0 1px,#d8eef4 1px,#d8eef4 3px)"></div>
<div class="a" style="left:891px;top:318px;width:1px;height:30px;background:repeating-linear-gradient(#c6d8e0 0,#c6d8e0 1px,#d8eef4 1px,#d8eef4 3px)"></div>
<div class="a" style="left:1244px;top:318px;width:1px;height:30px;background:repeating-linear-gradient(#c6d8e0 0,#c6d8e0 1px,#d8eef4 1px,#d8eef4 3px)"></div>
<div class="t" style="left:29.50px;top:323.10px;font-size:19.2px;letter-spacing:-0.3px">00-000-4521</div>
<div class="t" style="left:193.50px;top:323.10px;font-size:19.2px;letter-spacing:-0.3px">Realized Loss</div>
<div class="t" style="left:475.50px;top:323.10px;font-size:19.2px;letter-spacing:-0.3px">Debit</div>
<div class="t" style="left:671.50px;top:323.10px;font-size:19.2px;letter-spacing:-0.3px">825</div>
<div class="t" style="left:896.50px;top:323.10px;font-size:19.2px;letter-spacing:-0.3px">Losses on Currency Exchange</div>
<div class="t" style="left:1249.50px;top:323.10px;font-size:19.2px;letter-spacing:-0.3px">010003500</div>
<div class="a" style="left:25px;top:349px;width:1457px;height:31px;background:#fff"></div>
<div class="a" style="left:1px;top:349px;width:23px;height:31px;background:linear-gradient(#fdfdfd 0,#fdfdfd 1px,#f2f2f2 2px,#eeeeee 45%,#e2e2e2)"></div>
<div class="a" style="left:0px;top:380px;width:25px;height:1px;background:#9c9c9c"></div>
<div class="a" style="left:24px;top:349px;width:1px;height:32px;background:#9c9c9c"></div>
<div class="a" style="left:25px;top:380px;width:1457px;height:1px;background:#cfcfd4"></div>
<div class="a" style="left:188px;top:349px;width:1px;height:31px;background:repeating-linear-gradient(#d0d0d0 0,#d0d0d0 1px,#eeeeee 1px,#eeeeee 3px)"></div>
<div class="a" style="left:470px;top:349px;width:1px;height:31px;background:repeating-linear-gradient(#d0d0d0 0,#d0d0d0 1px,#eeeeee 1px,#eeeeee 3px)"></div>
<div class="a" style="left:666px;top:349px;width:1px;height:31px;background:repeating-linear-gradient(#d0d0d0 0,#d0d0d0 1px,#eeeeee 1px,#eeeeee 3px)"></div>
<div class="a" style="left:891px;top:349px;width:1px;height:31px;background:repeating-linear-gradient(#d0d0d0 0,#d0d0d0 1px,#eeeeee 1px,#eeeeee 3px)"></div>
<div class="a" style="left:1244px;top:349px;width:1px;height:31px;background:repeating-linear-gradient(#d0d0d0 0,#d0d0d0 1px,#eeeeee 1px,#eeeeee 3px)"></div>
<div class="t" style="left:29.50px;top:354.10px;font-size:19.2px;letter-spacing:-0.3px">00-000-4530</div>
<div class="t" style="left:193.50px;top:354.10px;font-size:19.2px;letter-spacing:-0.3px">Unrealized Gains</div>
<div class="t" style="left:475.50px;top:354.10px;font-size:19.2px;letter-spacing:-0.3px">Credit</div>
<div class="t" style="left:671.50px;top:354.10px;font-size:19.2px;letter-spacing:-0.3px">720</div>
<div class="t" style="left:896.50px;top:354.10px;font-size:19.2px;letter-spacing:-0.3px">Gains on Currency Exchange</div>
<div class="t" style="left:1249.50px;top:354.10px;font-size:19.2px;letter-spacing:-0.3px">010003500</div>
<div class="a" style="left:25px;top:381px;width:1457px;height:30px;background:linear-gradient(#a4d7e8,#b0dfec 30%,#c3e9f2 60%,#d6f6fa)"></div>
<div class="a" style="left:1px;top:381px;width:23px;height:30px;background:linear-gradient(#fdfdfd 0,#fdfdfd 1px,#f2f2f2 2px,#eeeeee 45%,#e2e2e2)"></div>
<div class="a" style="left:0px;top:411px;width:25px;height:1px;background:#9c9c9c"></div>
<div class="a" style="left:24px;top:381px;width:1px;height:31px;background:#9c9c9c"></div>
<div class="a" style="left:25px;top:411px;width:1457px;height:1px;background:#dedede"></div>
<div class="a" style="left:188px;top:381px;width:1px;height:30px;background:repeating-linear-gradient(#c6d8e0 0,#c6d8e0 1px,#d8eef4 1px,#d8eef4 3px)"></div>
<div class="a" style="left:470px;top:381px;width:1px;height:30px;background:repeating-linear-gradient(#c6d8e0 0,#c6d8e0 1px,#d8eef4 1px,#d8eef4 3px)"></div>
<div class="a" style="left:666px;top:381px;width:1px;height:30px;background:repeating-linear-gradient(#c6d8e0 0,#c6d8e0 1px,#d8eef4 1px,#d8eef4 3px)"></div>
<div class="a" style="left:891px;top:381px;width:1px;height:30px;background:repeating-linear-gradient(#c6d8e0 0,#c6d8e0 1px,#d8eef4 1px,#d8eef4 3px)"></div>
<div class="a" style="left:1244px;top:381px;width:1px;height:30px;background:repeating-linear-gradient(#c6d8e0 0,#c6d8e0 1px,#d8eef4 1px,#d8eef4 3px)"></div>
<div class="t" style="left:29.50px;top:386.10px;font-size:19.2px;letter-spacing:-0.3px">00-000-4531</div>
<div class="t" style="left:193.50px;top:386.10px;font-size:19.2px;letter-spacing:-0.3px">Unrealized Loss</div>
<div class="t" style="left:475.50px;top:386.10px;font-size:19.2px;letter-spacing:-0.3px">Debit</div>
<div class="t" style="left:671.50px;top:386.10px;font-size:19.2px;letter-spacing:-0.3px">825</div>
<div class="t" style="left:896.50px;top:386.10px;font-size:19.2px;letter-spacing:-0.3px">Losses on Currency Exchange</div>
<div class="t" style="left:1249.50px;top:386.10px;font-size:19.2px;letter-spacing:-0.3px">010003500</div>
<div class="a" style="left:25px;top:412px;width:1457px;height:31px;background:#fff"></div>
<div class="a" style="left:1px;top:412px;width:23px;height:31px;background:linear-gradient(#fdfdfd 0,#fdfdfd 1px,#f2f2f2 2px,#eeeeee 45%,#e2e2e2)"></div>
<div class="a" style="left:0px;top:443px;width:25px;height:1px;background:#9c9c9c"></div>
<div class="a" style="left:24px;top:412px;width:1px;height:32px;background:#9c9c9c"></div>
<div class="a" style="left:25px;top:443px;width:1457px;height:1px;background:#cfcfd4"></div>
<div class="a" style="left:188px;top:412px;width:1px;height:31px;background:repeating-linear-gradient(#d0d0d0 0,#d0d0d0 1px,#eeeeee 1px,#eeeeee 3px)"></div>
<div class="a" style="left:470px;top:412px;width:1px;height:31px;background:repeating-linear-gradient(#d0d0d0 0,#d0d0d0 1px,#eeeeee 1px,#eeeeee 3px)"></div>
<div class="a" style="left:666px;top:412px;width:1px;height:31px;background:repeating-linear-gradient(#d0d0d0 0,#d0d0d0 1px,#eeeeee 1px,#eeeeee 3px)"></div>
<div class="a" style="left:891px;top:412px;width:1px;height:31px;background:repeating-linear-gradient(#d0d0d0 0,#d0d0d0 1px,#eeeeee 1px,#eeeeee 3px)"></div>
<div class="a" style="left:1244px;top:412px;width:1px;height:31px;background:repeating-linear-gradient(#d0d0d0 0,#d0d0d0 1px,#eeeeee 1px,#eeeeee 3px)"></div>
<div class="t" style="left:29.50px;top:417.10px;font-size:19.2px;letter-spacing:-0.3px">00-000-5000</div>
<div class="t" style="left:193.50px;top:417.10px;font-size:19.2px;letter-spacing:-0.3px">COGS Computer</div>
<div class="t" style="left:475.50px;top:417.10px;font-size:19.2px;letter-spacing:-0.3px">Debit</div>
<div class="t" style="left:671.50px;top:417.10px;font-size:19.2px;letter-spacing:-0.3px">600</div>
<div class="t" style="left:896.50px;top:417.10px;font-size:19.2px;letter-spacing:-0.3px">Cost of Sales</div>
<div class="t" style="left:1249.50px;top:417.10px;font-size:19.2px;letter-spacing:-0.3px">010003500</div>
<div class="a" style="left:25px;top:444px;width:1457px;height:30px;background:linear-gradient(#a4d7e8,#b0dfec 30%,#c3e9f2 60%,#d6f6fa)"></div>
<div class="a" style="left:1px;top:444px;width:23px;height:30px;background:linear-gradient(#fdfdfd 0,#fdfdfd 1px,#f2f2f2 2px,#eeeeee 45%,#e2e2e2)"></div>
<div class="a" style="left:0px;top:474px;width:25px;height:1px;background:#9c9c9c"></div>
<div class="a" style="left:24px;top:444px;width:1px;height:31px;background:#9c9c9c"></div>
<div class="a" style="left:25px;top:474px;width:1457px;height:1px;background:#dedede"></div>
<div class="a" style="left:188px;top:444px;width:1px;height:30px;background:repeating-linear-gradient(#c6d8e0 0,#c6d8e0 1px,#d8eef4 1px,#d8eef4 3px)"></div>
<div class="a" style="left:470px;top:444px;width:1px;height:30px;background:repeating-linear-gradient(#c6d8e0 0,#c6d8e0 1px,#d8eef4 1px,#d8eef4 3px)"></div>
<div class="a" style="left:666px;top:444px;width:1px;height:30px;background:repeating-linear-gradient(#c6d8e0 0,#c6d8e0 1px,#d8eef4 1px,#d8eef4 3px)"></div>
<div class="a" style="left:891px;top:444px;width:1px;height:30px;background:repeating-linear-gradient(#c6d8e0 0,#c6d8e0 1px,#d8eef4 1px,#d8eef4 3px)"></div>
<div class="a" style="left:1244px;top:444px;width:1px;height:30px;background:repeating-linear-gradient(#c6d8e0 0,#c6d8e0 1px,#d8eef4 1px,#d8eef4 3px)"></div>
<div class="t" style="left:29.50px;top:449.10px;font-size:19.2px;letter-spacing:-0.3px">00-000-5005</div>
<div class="t" style="left:193.50px;top:449.10px;font-size:19.2px;letter-spacing:-0.3px">COGS Adjustment</div>
<div class="t" style="left:475.50px;top:449.10px;font-size:19.2px;letter-spacing:-0.3px">Debit</div>
<div class="t" style="left:671.50px;top:449.10px;font-size:19.2px;letter-spacing:-0.3px">600</div>
<div class="t" style="left:896.50px;top:449.10px;font-size:19.2px;letter-spacing:-0.3px">Cost of Sales</div>
<div class="t" style="left:1249.50px;top:449.10px;font-size:19.2px;letter-spacing:-0.3px">010003500</div>
<div class="a" style="left:25px;top:475px;width:1457px;height:31px;background:#fff"></div>
<div class="a" style="left:1px;top:475px;width:23px;height:31px;background:linear-gradient(#fdfdfd 0,#fdfdfd 1px,#f2f2f2 2px,#eeeeee 45%,#e2e2e2)"></div>
<div class="a" style="left:0px;top:506px;width:25px;height:1px;background:#9c9c9c"></div>
<div class="a" style="left:24px;top:475px;width:1px;height:32px;background:#9c9c9c"></div>
<div class="a" style="left:25px;top:506px;width:1457px;height:1px;background:#cfcfd4"></div>
<div class="a" style="left:188px;top:475px;width:1px;height:31px;background:repeating-linear-gradient(#d0d0d0 0,#d0d0d0 1px,#eeeeee 1px,#eeeeee 3px)"></div>
<div class="a" style="left:470px;top:475px;width:1px;height:31px;background:repeating-linear-gradient(#d0d0d0 0,#d0d0d0 1px,#eeeeee 1px,#eeeeee 3px)"></div>
<div class="a" style="left:666px;top:475px;width:1px;height:31px;background:repeating-linear-gradient(#d0d0d0 0,#d0d0d0 1px,#eeeeee 1px,#eeeeee 3px)"></div>
<div class="a" style="left:891px;top:475px;width:1px;height:31px;background:repeating-linear-gradient(#d0d0d0 0,#d0d0d0 1px,#eeeeee 1px,#eeeeee 3px)"></div>
<div class="a" style="left:1244px;top:475px;width:1px;height:31px;background:repeating-linear-gradient(#d0d0d0 0,#d0d0d0 1px,#eeeeee 1px,#eeeeee 3px)"></div>
<div class="t" style="left:29.50px;top:480.10px;font-size:19.2px;letter-spacing:-0.3px">00-000-5010</div>
<div class="t" style="left:193.50px;top:480.10px;font-size:19.2px;letter-spacing:-0.3px">COGS Accessories</div>
<div class="t" style="left:475.50px;top:480.10px;font-size:19.2px;letter-spacing:-0.3px">Debit</div>
<div class="t" style="left:671.50px;top:480.10px;font-size:19.2px;letter-spacing:-0.3px">600</div>
<div class="t" style="left:896.50px;top:480.10px;font-size:19.2px;letter-spacing:-0.3px">Cost of Sales</div>
<div class="t" style="left:1249.50px;top:480.10px;font-size:19.2px;letter-spacing:-0.3px">010003500</div>
<div class="a" style="left:25px;top:507px;width:1457px;height:30px;background:linear-gradient(#a4d7e8,#b0dfec 30%,#c3e9f2 60%,#d6f6fa)"></div>
<div class="a" style="left:1px;top:507px;width:23px;height:30px;background:linear-gradient(#fdfdfd 0,#fdfdfd 1px,#f2f2f2 2px,#eeeeee 45%,#e2e2e2)"></div>
<div class="a" style="left:0px;top:537px;width:25px;height:1px;background:#9c9c9c"></div>
<div class="a" style="left:24px;top:507px;width:1px;height:31px;background:#9c9c9c"></div>
<div class="a" style="left:25px;top:537px;width:1457px;height:1px;background:#dedede"></div>
<div class="a" style="left:188px;top:507px;width:1px;height:30px;background:repeating-linear-gradient(#c6d8e0 0,#c6d8e0 1px,#d8eef4 1px,#d8eef4 3px)"></div>
<div class="a" style="left:470px;top:507px;width:1px;height:30px;background:repeating-linear-gradient(#c6d8e0 0,#c6d8e0 1px,#d8eef4 1px,#d8eef4 3px)"></div>
<div class="a" style="left:666px;top:507px;width:1px;height:30px;background:repeating-linear-gradient(#c6d8e0 0,#c6d8e0 1px,#d8eef4 1px,#d8eef4 3px)"></div>
<div class="a" style="left:891px;top:507px;width:1px;height:30px;background:repeating-linear-gradient(#c6d8e0 0,#c6d8e0 1px,#d8eef4 1px,#d8eef4 3px)"></div>
<div class="a" style="left:1244px;top:507px;width:1px;height:30px;background:repeating-linear-gradient(#c6d8e0 0,#c6d8e0 1px,#d8eef4 1px,#d8eef4 3px)"></div>
<div class="t" style="left:29.50px;top:512.10px;font-size:19.2px;letter-spacing:-0.3px">00-000-5020</div>
<div class="t" style="left:193.50px;top:512.10px;font-size:19.2px;letter-spacing:-0.3px">COGS Software</div>
<div class="t" style="left:475.50px;top:512.10px;font-size:19.2px;letter-spacing:-0.3px">Debit</div>
<div class="t" style="left:671.50px;top:512.10px;font-size:19.2px;letter-spacing:-0.3px">600</div>
<div class="t" style="left:896.50px;top:512.10px;font-size:19.2px;letter-spacing:-0.3px">Cost of Sales</div>
<div class="t" style="left:1249.50px;top:512.10px;font-size:19.2px;letter-spacing:-0.3px">010003500</div>
<div class="a" style="left:25px;top:538px;width:1457px;height:31px;background:#fff"></div>
<div class="a" style="left:1px;top:538px;width:23px;height:31px;background:linear-gradient(#fdfdfd 0,#fdfdfd 1px,#f2f2f2 2px,#eeeeee 45%,#e2e2e2)"></div>
<div class="a" style="left:0px;top:569px;width:25px;height:1px;background:#9c9c9c"></div>
<div class="a" style="left:24px;top:538px;width:1px;height:32px;background:#9c9c9c"></div>
<div class="a" style="left:25px;top:569px;width:1457px;height:1px;background:#cfcfd4"></div>
<div class="a" style="left:188px;top:538px;width:1px;height:31px;background:repeating-linear-gradient(#d0d0d0 0,#d0d0d0 1px,#eeeeee 1px,#eeeeee 3px)"></div>
<div class="a" style="left:470px;top:538px;width:1px;height:31px;background:repeating-linear-gradient(#d0d0d0 0,#d0d0d0 1px,#eeeeee 1px,#eeeeee 3px)"></div>
<div class="a" style="left:666px;top:538px;width:1px;height:31px;background:repeating-linear-gradient(#d0d0d0 0,#d0d0d0 1px,#eeeeee 1px,#eeeeee 3px)"></div>
<div class="a" style="left:891px;top:538px;width:1px;height:31px;background:repeating-linear-gradient(#d0d0d0 0,#d0d0d0 1px,#eeeeee 1px,#eeeeee 3px)"></div>
<div class="a" style="left:1244px;top:538px;width:1px;height:31px;background:repeating-linear-gradient(#d0d0d0 0,#d0d0d0 1px,#eeeeee 1px,#eeeeee 3px)"></div>
<div class="t" style="left:29.50px;top:543.10px;font-size:19.2px;letter-spacing:-0.3px">00-000-5030</div>
<div class="t" style="left:193.50px;top:543.10px;font-size:19.2px;letter-spacing:-0.3px">COGS Labor</div>
<div class="t" style="left:475.50px;top:543.10px;font-size:19.2px;letter-spacing:-0.3px">Debit</div>
<div class="t" style="left:671.50px;top:543.10px;font-size:19.2px;letter-spacing:-0.3px">600</div>
<div class="t" style="left:896.50px;top:543.10px;font-size:19.2px;letter-spacing:-0.3px">Cost of Sales</div>
<div class="t" style="left:1249.50px;top:543.10px;font-size:19.2px;letter-spacing:-0.3px">010003500</div>
<div class="a" style="left:25px;top:570px;width:1457px;height:30px;background:linear-gradient(#a4d7e8,#b0dfec 30%,#c3e9f2 60%,#d6f6fa)"></div>
<div class="a" style="left:1px;top:570px;width:23px;height:30px;background:linear-gradient(#fdfdfd 0,#fdfdfd 1px,#f2f2f2 2px,#eeeeee 45%,#e2e2e2)"></div>
<div class="a" style="left:0px;top:600px;width:25px;height:1px;background:#9c9c9c"></div>
<div class="a" style="left:24px;top:570px;width:1px;height:31px;background:#9c9c9c"></div>
<div class="a" style="left:25px;top:600px;width:1457px;height:1px;background:#dedede"></div>
<div class="a" style="left:188px;top:570px;width:1px;height:30px;background:repeating-linear-gradient(#c6d8e0 0,#c6d8e0 1px,#d8eef4 1px,#d8eef4 3px)"></div>
<div class="a" style="left:470px;top:570px;width:1px;height:30px;background:repeating-linear-gradient(#c6d8e0 0,#c6d8e0 1px,#d8eef4 1px,#d8eef4 3px)"></div>
<div class="a" style="left:666px;top:570px;width:1px;height:30px;background:repeating-linear-gradient(#c6d8e0 0,#c6d8e0 1px,#d8eef4 1px,#d8eef4 3px)"></div>
<div class="a" style="left:891px;top:570px;width:1px;height:30px;background:repeating-linear-gradient(#c6d8e0 0,#c6d8e0 1px,#d8eef4 1px,#d8eef4 3px)"></div>
<div class="a" style="left:1244px;top:570px;width:1px;height:30px;background:repeating-linear-gradient(#c6d8e0 0,#c6d8e0 1px,#d8eef4 1px,#d8eef4 3px)"></div>
<div class="t" style="left:29.50px;top:575.10px;font-size:19.2px;letter-spacing:-0.3px">00-000-5040</div>
<div class="t" style="left:193.50px;top:575.10px;font-size:19.2px;letter-spacing:-0.3px">Cost of Warranties</div>
<div class="t" style="left:475.50px;top:575.10px;font-size:19.2px;letter-spacing:-0.3px">Debit</div>
<div class="t" style="left:671.50px;top:575.10px;font-size:19.2px;letter-spacing:-0.3px">600</div>
<div class="t" style="left:896.50px;top:575.10px;font-size:19.2px;letter-spacing:-0.3px">Other</div>
<div class="t" style="left:1249.50px;top:575.10px;font-size:19.2px;letter-spacing:-0.3px">010003500</div>
</div></div><!--/grid-->

<!-- footer -->
<div class="a" style="left:9px;top:872px;width:1483px;height:40px;border:1px solid #a4a4a4;border-top-color:#aaaaaa;border-bottom-color:#b4b4b4;box-shadow:inset 1px 0 0 #fff;background:linear-gradient(#ffffff 0,#ffffff 3px,#f0f0f0 3px,#eeeeee 12px,#e8e8e8 20px,#e6e6e6 35px,#d4d4d4 35px,#d4d4d4 36px,#f0f0f0 36px,#f0f0f0 37px,#e2e2e2 37px)"></div>
<div class="a" style="left:3px;top:912px;width:1515px;height:1px;background:#dcdcdc"></div>
<div class="a" style="left:3px;top:913px;width:1515px;height:2px;background:#f0f0f0"></div>
<!-- scrollbar -->
<div class="a" style="left:1492px;top:237px;width:26px;height:675px;border:1px solid #88c0f0;border-radius:4px 4px 3px 3px;background:linear-gradient(90deg,#e2f6fc,#eaf8fd 45%,#f8fdff 60%,#fcfeff)"></div>
<svg class="a" style="left:1488px;top:232px" width="32" height="683" viewBox="1488 232 32 683">
<defs><linearGradient id="sbg" x1="0" x2="1" y1="0" y2="0"><stop offset="0" stop-color="#eaf6fe"/><stop offset="0.5" stop-color="#e2f2fc"/><stop offset="0.52" stop-color="#bfe2f8"/><stop offset="1" stop-color="#b4dcf6"/></linearGradient></defs>
<rect x="1493.5" y="238" width="23.5" height="19.5" rx="3" fill="url(#sbg)" stroke="#b0d8f4" stroke-width="1"/>
<path d="M1498.5 250.5 L1505.1 244.2 L1511.7 250.5" fill="none" stroke="#1e62d0" stroke-width="3"/>
<rect x="1493.5" y="262.5" width="23" height="28" rx="4.5" fill="url(#sbg)" stroke="#8cc4ee" stroke-width="1.2"/>
<g fill="#2a6ad8"><rect x="1500" y="273.3" width="10.5" height="1.6"/><rect x="1500" y="276.3" width="10.5" height="1.6"/><rect x="1500" y="279.3" width="10.5" height="1.6"/></g>
<rect x="1493.5" y="891" width="23.5" height="20.3" rx="3" fill="url(#sbg)" stroke="#a8d4f2" stroke-width="1"/>
<path d="M1498.8 898.5 L1505.3 904.6 L1511.7 898.5" fill="none" stroke="#1e62d0" stroke-width="3"/>
</svg>
<!-- collapse button -->
<div class="a" style="left:1490px;top:90px;width:23.5px;height:23.5px;border:1.5px solid #7096bc;border-radius:5px;background:linear-gradient(#ffffff,#f4f8fc)"></div>
<svg class="a" style="left:1490px;top:90px" width="24" height="24" viewBox="1490 90 24 24">
<path d="M1495.8 100.2 L1501.7 94.8 L1507.6 100.2 M1495.8 107.3 L1501.7 101.9 L1507.6 107.3" fill="none" stroke="#3e4890" stroke-width="2.4"/>
</svg>
<!-- row indicator -->
<svg class="a" style="left:10px;top:326px" width="24" height="30" viewBox="10 326 24 30">
<path d="M19.4 335.2 L25.6 341.1 L19.4 347" fill="none" stroke="#5a5a5a" stroke-width="3"/>
</svg>
</body></html>
